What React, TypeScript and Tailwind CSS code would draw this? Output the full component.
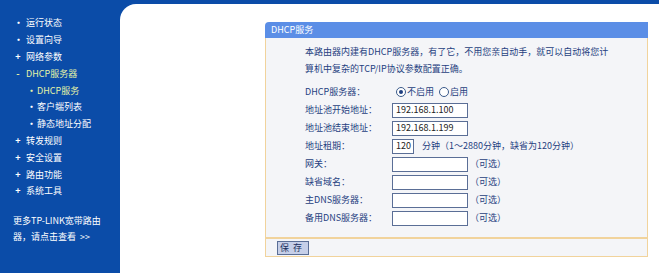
import React from 'react';

const font = { fontFamily: '"Noto Sans CJK SC", "Liberation Sans", sans-serif' };

type MenuItem = { label: string; mark: string; sub?: boolean; active?: boolean };

const menu: MenuItem[] = [
  { label: '运行状态', mark: '•' },
  { label: '设置向导', mark: '•' },
  { label: '网络参数', mark: '+' },
  { label: 'DHCP服务器', mark: '-', active: true },
  { label: 'DHCP服务', mark: '•', sub: true, active: true },
  { label: '客户端列表', mark: '•', sub: true },
  { label: '静态地址分配', mark: '•', sub: true },
  { label: '转发规则', mark: '+' },
  { label: '安全设置', mark: '+' },
  { label: '路由功能', mark: '+' },
  { label: '系统工具', mark: '+' },
];

function Sidebar() {
  return (
    <div className="w-[120px] shrink-0 pt-[14.6px] text-[9px] text-white">
      {menu.map((m) => (
        <div
          key={m.label}
          className={`flex h-[16.8px] items-center whitespace-nowrap ${m.sub ? 'pl-[27px]' : 'pl-[14px]'} ${m.active ? 'text-[#e4f2a6]' : ''}`}
        >
          <span className={`w-[8px] text-center font-bold leading-none ${m.sub ? 'mr-[2px]' : 'mr-[4px]'}`}>{m.mark}</span>
          <span className="leading-none">{m.label}</span>
        </div>
      ))}
      <div className="mt-[14px] whitespace-nowrap pl-[13px] text-[9px] leading-[16px]">
        更多TP-LINK宽带路由
        <br />
        器，请点击查看 &nbsp;&gt;&gt;
      </div>
    </div>
  );
}

function Row({ label, children }: { label: string; children: React.ReactNode }) {
  return (
    <div className="flex h-[18px] items-center whitespace-nowrap">
      <div className="w-[87px] shrink-0">{label}</div>
      <div className="flex items-center">{children}</div>
    </div>
  );
}

function Field({ value = '', w = 'w-[76px]' }: { value?: string; w?: string }) {
  return (
    <div className={`${w} flex h-[15px] items-center border border-[#5a6e96] bg-white px-[3px] text-[9px] text-[#222]`}>
      {value}
    </div>
  );
}

function Radio({ on }: { on?: boolean }) {
  return (
    <span className="mr-[1px] inline-flex h-[10px] w-[10px] items-center justify-center rounded-full border border-[#3a5a8a] bg-white">
      {on && <span className="h-[4px] w-[4px] rounded-full bg-[#1f3f80]" />}
    </span>
  );
}

function Optional() {
  return <span className="ml-[2px]">（可选）</span>;
}

function Panel() {
  return (
    <div className="ml-[145px] mt-[18px] w-[383px] text-[9px] text-[#1f3f80]">
      <div className="flex h-[16px] items-center rounded-tl-[4px] bg-[#5b8ee6] pl-[6px] text-white">DHCP服务</div>
      <div className="border-x border-[#f1d39c] bg-[#f4f5f8] pb-[10px] pl-[39px] pt-[5px]">
        <p className="whitespace-nowrap leading-[17px]">
          本路由器内建有DHCP服务器，有了它，不用您亲自动手，就可以自动将您计
          <br />
          算机中复杂的TCP/IP协议参数配置正确。
        </p>
        <div className="mt-[6px]">
          <Row label="DHCP服务器：">
            <span className="ml-[4px] flex items-center">
              <Radio on />
              不启用
              <span className="ml-[5px] flex items-center">
                <Radio />
                启用
              </span>
            </span>
          </Row>
          <Row label="地址池开始地址：">
            <Field value="192.168.1.100" />
          </Row>
          <Row label="地址池结束地址：">
            <Field value="192.168.1.199" />
          </Row>
          <Row label="地址租期：">
            <Field value="120" w="w-[22px]" />
            <span className="ml-[8px]">分钟（1～2880分钟，缺省为120分钟）</span>
          </Row>
          <Row label="网关：">
            <Field />
            <Optional />
          </Row>
          <Row label="缺省域名：">
            <Field />
            <Optional />
          </Row>
          <Row label="主DNS服务器：">
            <Field />
            <Optional />
          </Row>
          <Row label="备用DNS服务器：">
            <Field />
            <Optional />
          </Row>
        </div>
      </div>
      <div className="flex h-[20px] items-center border border-t-2 border-[#f1d39c] bg-[#f4f5f8] pl-[11px]">
        <button className="flex h-[14px] w-[32px] items-center justify-center border border-[#5a6e96] bg-[#c6cfe8] text-[9px] tracking-[4px] text-[#1a2f60]">
          保存
        </button>
      </div>
    </div>
  );
}

export default function App() {
  return (
    <div className="flex h-[273px] w-[659px] overflow-hidden bg-[#0b4ca8]" style={font}>
      <Sidebar />
      <div className="mt-[4px] flex-1 rounded-tl-[16px] bg-white">
        <Panel />
      </div>
    </div>
  );
}
